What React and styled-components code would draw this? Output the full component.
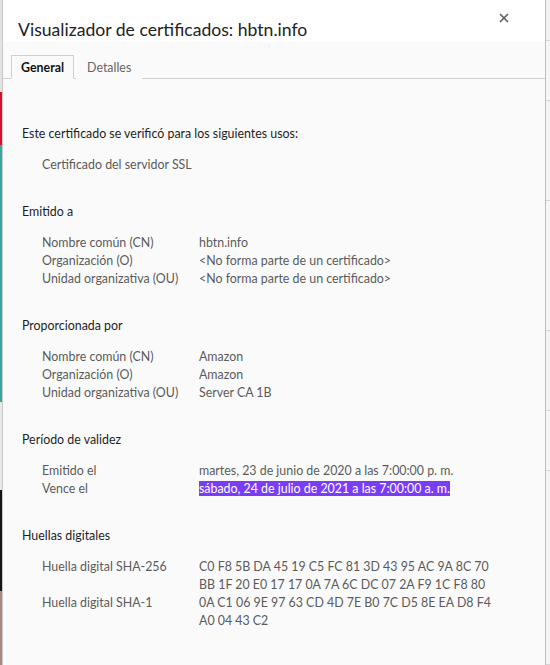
import React from "react";
import styled, { createGlobalStyle } from "styled-components";

const Global = createGlobalStyle`
  html, body { margin: 0; padding: 0; background: #ececec; }
  body { font-family: "Lato", "Noto Sans", sans-serif; }
`;

const Page = styled.div`
  display: flex;
  width: 550px;
  height: 665px;
  overflow: hidden;
`;

const LeftStrip = styled.div`
  width: 2px;
  display: flex;
  flex-direction: column;
  flex-shrink: 0;
`;

const StripBlock = styled.div`
  height: ${(p) => p.h}px;
  background: ${(p) => p.c};
  border-bottom: ${(p) => (p.line ? "1px solid #d6d6d6" : "0")};
`;

const RightStrip = styled.div`
  width: 4px;
  flex-shrink: 0;
  background: #f4f4f4;
  display: flex;
  flex-direction: column;
`;

const Dialog = styled.div`
  flex: 1;
  display: flex;
  flex-direction: column;
  background: #fafafa;
  border-left: 1px solid #c8c8c8;
  border-right: 1px solid #bdbdbd;
`;

const Header = styled.div`
  height: 42px;
  background: #ffffff;
  display: flex;
  justify-content: space-between;
  align-items: flex-start;
  padding: 0 0 0 15px;
`;

const Title = styled.h1`
  margin: 18px 0 0;
  font-size: 17.6px;
  font-weight: 400;
  line-height: 24px;
  color: #222;
`;

const Close = styled.button`
  border: 0;
  background: none;
  padding: 0;
  margin: 10px 33px 0 0;
  width: 16px;
  height: 16px;
  display: flex;
  align-items: center;
  justify-content: center;
`;

const TabBar = styled.div`
  display: flex;
  padding: 13px 0 0 8px;
  border-bottom: 1px solid #cfcfcf;
`;

const Tab = styled.div`
  height: 22px;
  padding: 0 ${(p) => (p.active ? 9 : 10)}px;
  margin-right: 2px;
  margin-bottom: -1px;
  display: flex;
  align-items: center;
  font-size: 12.4px;
  font-weight: ${(p) => (p.active ? 700 : 400)};
  color: ${(p) => (p.active ? "#111" : "#666")};
  border: 1px solid ${(p) => (p.active ? "#cfcfcf" : "transparent")};
  border-bottom: 1px solid ${(p) => (p.active ? "#fafafa" : "transparent")};
  background: #fafafa;
`;

const Content = styled.div`
  padding: 46px 0 0 19px;
  display: flex;
  flex-direction: column;
  gap: 29px;
`;

const Section = styled.section`
  display: flex;
  flex-direction: column;
  gap: 13px;
`;

const Heading = styled.div`
  font-size: 12.4px;
  line-height: 18px;
  color: #1e1e1e;
`;

const Rows = styled.div`
  display: grid;
  grid-template-columns: 157px auto;
  padding-left: 20px;
  font-size: 12.4px;
  line-height: 18px;
  color: #5a5a5a;
`;

const Value = styled.div`
  white-space: pre-line;
  grid-column: ${(p) => (p.wide ? "1 / -1" : "auto")};
`;

const Selected = styled.span`
  background: #7b3cf6;
  color: #ffffff;
`;

const sections = [
  {
    title: "Este certificado se verificó para los siguientes usos:",
    single: "Certificado del servidor SSL",
  },
  {
    title: "Emitido a",
    rows: [
      ["Nombre común (CN)", "hbtn.info"],
      ["Organización (O)", "<No forma parte de un certificado>"],
      ["Unidad organizativa (OU)", "<No forma parte de un certificado>"],
    ],
  },
  {
    title: "Proporcionada por",
    rows: [
      ["Nombre común (CN)", "Amazon"],
      ["Organización (O)", "Amazon"],
      ["Unidad organizativa (OU)", "Server CA 1B"],
    ],
  },
  {
    title: "Período de validez",
    rows: [
      ["Emitido el", "martes, 23 de junio de 2020 a las 7:00:00 p. m."],
      ["Vence el", "sábado, 24 de julio de 2021 a las 7:00:00 a. m.", true],
    ],
  },
  {
    title: "Huellas digitales",
    rows: [
      [
        "Huella digital SHA-256",
        "C0 F8 5B DA 45 19 C5 FC 81 3D 43 95 AC 9A 8C 70\nBB 1F 20 E0 17 17 0A 7A 6C DC 07 2A F9 1C F8 80",
      ],
      [
        "Huella digital SHA-1",
        "0A C1 06 9E 97 63 CD 4D 7E B0 7C D5 8E EA D8 F4\nA0 04 43 C2",
      ],
    ],
  },
];

const leftBlocks = [
  [92, "#e2e2e2"],
  [53, "#d8102c"],
  [257, "#3aa79f"],
  [88, "#e8e8e8"],
  [101, "#151515"],
  [74, "#a88d7e"],
];

const rightBlocks = [
  [40, "#f2f2f2"],
  [60, "#f6f6f6"],
  [100, "#f4f4f4"],
  [130, "#f6f6f6"],
  [80, "#f3f3f3"],
  [60, "#f6f6f6"],
  [195, "#f4f4f4"],
];

export default function App() {
  return (
    <Page>
      <Global />
      <LeftStrip>
        {leftBlocks.map(([h, c], i) => (
          <StripBlock key={i} h={h} c={c} />
        ))}
      </LeftStrip>
      <Dialog>
        <Header>
          <Title>Visualizador de certificados: hbtn.info</Title>
          <Close aria-label="Cerrar">
            <svg width="10" height="10" viewBox="0 0 10 10">
              <path d="M1 1L9 9M9 1L1 9" stroke="#5c5c5c" strokeWidth="1.6" />
            </svg>
          </Close>
        </Header>
        <TabBar>
          <Tab active>General</Tab>
          <Tab>Detalles</Tab>
        </TabBar>
        <Content>
          {sections.map((s) => (
            <Section key={s.title}>
              <Heading>{s.title}</Heading>
              <Rows>
                {s.single ? (
                  <Value wide>{s.single}</Value>
                ) : (
                  s.rows.map(([k, v, sel]) => (
                    <React.Fragment key={k}>
                      <div>{k}</div>
                      <Value>{sel ? <Selected>{v}</Selected> : v}</Value>
                    </React.Fragment>
                  ))
                )}
              </Rows>
            </Section>
          ))}
        </Content>
      </Dialog>
      <RightStrip>
        {rightBlocks.map(([h, c], i) => (
          <StripBlock key={i} h={h} c={c} line />
        ))}
      </RightStrip>
    </Page>
  );
}
